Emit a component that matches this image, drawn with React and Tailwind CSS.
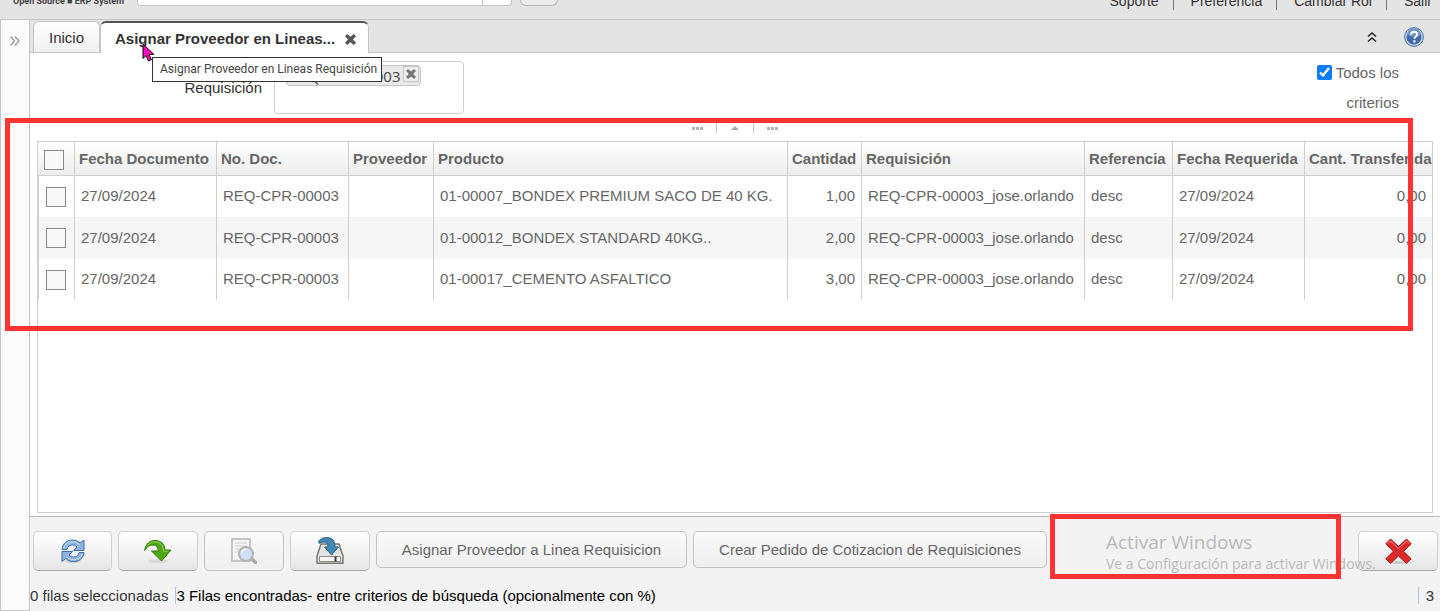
import { useState } from 'react';

const COLUMNS = [
  { key: 'fechaDoc', label: 'Fecha Documento', width: 'w-[142px]' },
  { key: 'noDoc', label: 'No. Doc.', width: 'w-[132px]' },
  { key: 'proveedor', label: 'Proveedor', width: 'w-[85px]' },
  { key: 'producto', label: 'Producto', width: 'w-auto' },
  { key: 'cantidad', label: 'Cantidad', width: 'w-[74px]', numeric: true },
  { key: 'requisicion', label: 'Requisición', width: 'w-[223px]' },
  { key: 'referencia', label: 'Referencia', width: 'w-[88px]' },
  { key: 'fechaReq', label: 'Fecha Requerida', width: 'w-[132px]' },
  { key: 'transferida', label: 'Cant. Transferida', width: 'w-[127px]', numeric: true },
];

const baseRow = {
  fechaDoc: '27/09/2024',
  noDoc: 'REQ-CPR-00003',
  proveedor: '',
  requisicion: 'REQ-CPR-00003_jose.orlando',
  referencia: 'desc',
  fechaReq: '27/09/2024',
  transferida: '0,00',
};

const ROWS = [
  { ...baseRow, id: 1, producto: '01-00007_BONDEX PREMIUM SACO DE 40 KG.', cantidad: '1,00' },
  { ...baseRow, id: 2, producto: '01-00012_BONDEX STANDARD 40KG..', cantidad: '2,00' },
  { ...baseRow, id: 3, producto: '01-00017_CEMENTO ASFALTICO', cantidad: '3,00' },
];

const CloseIcon = ({ className }) => (
  <svg viewBox="0 0 10 10" className={className} aria-hidden="true">
    <path d="M0 2 2 0 5 2.6 8 0 10 2 7.2 5 10 8 8 10 5 7.4 2 10 0 8 2.8 5z" fill="currentColor" />
  </svg>
);

const RefreshIcon = () => (
  <svg viewBox="0 0 24 24" className="size-6" aria-hidden="true">
    <ellipse cx="12" cy="22" rx="8" ry="2" fill="#000" opacity="0.12" />
    <path
      d="M1 10.500C1.500 4.500 6 1 11.500 1c3 0 5.500 1 7.500 3l4-3v10.500H12.500L16 8c-1.300-1.300-3-2-4.800-2-2.700 0-4.500 1.500-5.400 4.500z"
      fill="#8fb3de"
      stroke="#3c6eb0"
    />
    <path
      d="M23 13.500c-.5 6-5 9-10.500 9-3 0-5.500-1-7.500-3l-4 3V12.500h10.500L8 16c1.300 1.300 3 2 4.800 2 2.700 0 4.500-1.500 5.400-4.500z"
      fill="#8fb3de"
      stroke="#3c6eb0"
    />
    <path d="M3 9c1-4 4.500-6.200 8.500-6.200 3 0 5 1 7 3M21 15c-1 4-4.500 5.700-8.500 5.700-3 0-5-1-7-3" fill="none" stroke="#d3e3f5" />
  </svg>
);

const ArrowIcon = () => (
  <svg viewBox="0 0 28 24" className="h-6 w-7" aria-hidden="true">
    <ellipse cx="14" cy="22" rx="10" ry="2" fill="#000" opacity="0.08" />
    <path
      d="M.7 11.500C1.500 4.500 6 1.500 11 1.500c6 0 9.500 3.500 10 9.500h6L17.500 22 7.500 12h6.800c-.5-4-2.300-6-5.300-6-3 0-6 1.500-8.300 5.500z"
      fill="#4fa514"
      stroke="#357a0a"
    />
    <path d="M3 7.500C5 4 8 2.900 11 2.900c5 0 8 3 8.600 9.300h4" fill="none" stroke="#9ad65c" />
  </svg>
);

const ZoomIcon = () => (
  <svg viewBox="0 0 26 26" className="size-[26px]" aria-hidden="true">
    <path d="M1 1h18v22H1z" fill="#f6f6f6" stroke="#b5b5b5" strokeWidth="1.500" />
    <path d="M4 5h12M4 8h12M4 11h7M4 14h5" stroke="#cfcfcf" />
    <path d="m20.500 20.500 4 4" stroke="#a9a9a9" strokeWidth="3.500" strokeLinecap="round" />
    <circle cx="15" cy="16" r="7" fill="#cfe0f5" stroke="#b3b3b3" strokeWidth="2" />
    <path d="M10.500 15.500c0-2.500 2-4.500 4.500-4.500" fill="none" stroke="#f4f9ff" strokeWidth="1.500" />
  </svg>
);

const SaveIcon = () => (
  <svg viewBox="0 0 28 28" className="size-7" aria-hidden="true">
    <path d="M5 7h18l4 12v7.200H1V19z" fill="#e3e3e0" stroke="#7a7a76" strokeWidth="1.500" strokeLinejoin="round" />
    <path d="M3.500 19.500h21v5h-21z" fill="#f4f4f2" stroke="#8d8d88" />
    <path d="M18.500 19.500h2v5h-2z" fill="#3b3b39" />
    <path
      d="M2.500 4.500C5 1 8 .6 11 .6c5 0 8 3 8 9.400h3.500L15.500 18 8.500 10H12c0-3.500-1.500-5-4-5-1.500 0-3 .5-4.500 1.500z"
      fill="#4487b6"
      stroke="#2c6590"
    />
  </svg>
);

const CancelIcon = () => (
  <svg viewBox="0 0 27 27" className="size-[27px]" aria-hidden="true">
    <ellipse cx="13.500" cy="24.500" rx="8" ry="1.500" fill="#000" opacity="0.15" />
    <path
      d="M5.500 1 13.500 8.500 21.500 1l4.700 4.800-7.600 7.500 7.600 7.500-4.700 4.700-8-7.500-8 7.500-4.700-4.700 7.600-7.500L.8 5.800z"
      fill="#dc2a2a"
      stroke="#b11717"
      strokeLinejoin="round"
    />
    <path d="M3 5.500 5.500 3l8 7.500L21.500 3 24 5.500" fill="none" stroke="#f08a8a" />
  </svg>
);

const HelpIcon = () => (
  <svg viewBox="0 0 20 20" className="size-5" aria-hidden="true">
    <circle cx="10" cy="10" r="9.400" fill="#c4d3e8" stroke="#4a70a8" />
    <circle cx="10" cy="10" r="7.500" fill="#3f6bad" />
    <path d="M3 8a7 7 0 0 1 14 0c-4 2-9 3-14 0z" fill="#6f93c8" />
    <path d="M7 7.800c0-2 1.300-3 3.200-3 1.800 0 3 1 3 2.600 0 2-2.700 2.100-2.700 4.300" fill="none" stroke="#fff" strokeWidth="2" />
    <path d="M9.300 13.300h2.200v2.200H9.300z" fill="#fff" />
  </svg>
);

const MENU = ['Soporte', 'Preferencia', 'Cambiar Rol', 'Salir'];

const Header = () => (
  <header className="flex h-5 shrink-0 items-start overflow-hidden border-b border-[#c5c5c5] bg-[#e4e4e4]">
    <div className="ml-[13px] w-[124px] shrink-0 font-['Roboto',sans-serif] text-[9px] font-bold whitespace-nowrap text-[#444]">
      <p className="-mt-[5px] leading-3">Open Source ■ ERP System</p>
    </div>
    <div className="flex flex-1 gap-2">
      <div className="flex h-[6px] w-[375px] rounded-b border border-t-0 border-[#c5c5c5] bg-white">
        <div className="flex-1 border-r border-[#c5c5c5]" />
        <div className="w-7" />
      </div>
      <div className="h-[6px] w-[38px] rounded-b-md border border-t-0 border-[#b5b5b5] bg-[#ececec]" />
    </div>
    <nav className="-mt-2 mr-2 flex text-[14px] leading-[18px] text-[#333]">
      {MENU.map((item, i) => (
        <a
          key={item}
          href="#"
          className={i < MENU.length - 1 ? 'mr-[17px] border-r border-[#777] pr-[14px]' : ''}
        >
          {item}
        </a>
      ))}
    </nav>
  </header>
);

const Tabs = () => (
  <div className="flex h-[33px] shrink-0 items-end border-b border-[#c5c5c5] bg-[#e4e4e4] pl-[3px]">
    <button className="h-[31px] w-[67px] rounded-t-md border border-b-0 border-[#c5c5c5] bg-gradient-to-b from-white to-[#f0f0f0] pt-[2px] text-[15px] text-[#333]">
      Inicio
    </button>
    <div className="-mb-px flex h-8 items-center gap-[10px] rounded-t-md border-x border-t-2 border-x-[#c5c5c5] border-t-[#555] bg-white pt-[2px] pr-3 pl-[14px] text-[#333]">
      <button className="text-[15px] font-bold">Asignar Proveedor en Lineas...</button>
      <button aria-label="Cerrar pestaña" className="text-[#555]">
        <CloseIcon className="size-[11px]" />
      </button>
    </div>
    <div className="ml-auto flex h-[31px] items-center gap-[26px] pr-4">
      <button aria-label="Contraer">
        <svg viewBox="0 0 12 10" className="h-[10px] w-3" aria-hidden="true">
          <path d="m2 4.500 4-3.500 4 3.500M2 9.500 6 6l4 3.500" fill="none" stroke="#222" strokeWidth="1.500" />
        </svg>
      </button>
      <button aria-label="Ayuda">
        <HelpIcon />
      </button>
    </div>
  </div>
);

const Criteria = () => (
  <div className="flex h-[68px] shrink-0 items-start pt-2 text-[15px] text-[#333]">
    <span id="requisicion-label" className="mt-4 w-[232px] text-right leading-[22px]">
      Requisición
    </span>
    <div
      role="group"
      aria-labelledby="requisicion-label"
      className="ml-3 flex h-[53px] w-[190px] items-start rounded border border-[#cfcfcf] bg-white pt-[3px] pl-[11px]"
    >
      <span className="flex h-[21px] items-start rounded border border-[#c5c5c5] bg-[#e9e9e9] pr-px pl-1 font-['Open_Sans','Noto_Sans',sans-serif] leading-5 text-[#444]">
        REQ-CPR-00003
        <button aria-label="Quitar" className="ml-[2px] border border-[#c5c5c5] bg-[#eee] p-[2px] text-[#777]">
          <CloseIcon className="size-[10px]" />
        </button>
      </span>
    </div>
    <label className="-mt-[3px] mr-[41px] ml-auto w-[100px] text-right leading-[30px] text-[#666]">
      <input type="checkbox" defaultChecked className="mr-1 size-[15px] align-[-2px] accent-[#0a7cff]" />
      Todos los criterios
    </label>
  </div>
);

const Dots = () => (
  <svg viewBox="0 0 11 3" className="h-[3px] w-[11px]" aria-hidden="true">
    <path d="M0 0h3v3H0zM4 0h3v3H4zM8 0h3v3H8z" fill="#b5b5b5" />
  </svg>
);

const Splitter = () => (
  <div className="flex h-5 shrink-0 justify-center pt-[2px]">
    <div className="flex h-[10px] items-center">
      <Dots />
      <div className="mx-[13px] flex h-full w-[38px] items-center justify-center border-x border-[#c5c5c5]">
        <svg viewBox="0 0 8 4" className="h-1 w-2" aria-hidden="true">
          <path d="M4 0 8 4H0z" fill="#aaa" />
        </svg>
      </div>
      <Dots />
    </div>
  </div>
);

const Check = ({ label, ...props }) => (
  <input
    type="checkbox"
    aria-label={label}
    className="block size-5 appearance-none border border-[#888] bg-[#f8f8f8] checked:bg-[#777]"
    {...props}
  />
);

const Grid = ({ selected, toggle, toggleAll }) => (
  <div className="mr-[7px] mb-[3px] ml-[7px] min-h-0 flex-1 overflow-hidden border border-[#cfcfcf] bg-white">
    <table className="w-full table-fixed border-separate border-spacing-0 text-[15px] whitespace-nowrap text-[#666]">
      <thead>
        <tr className="h-[34px] bg-gradient-to-b from-white to-[#ececec] text-left">
          <th className="w-[37px] border-r border-b border-[#cfcfcf] pt-[2px] pl-[6px]">
            <Check label="Seleccionar todo" checked={selected.length === ROWS.length} onChange={toggleAll} />
          </th>
          {COLUMNS.map(({ key, label, width }) => (
            <th
              key={key}
              className={`${width} border-r border-b border-[#cfcfcf] pt-[2px] pl-1 font-bold last:border-r-0`}
            >
              {label}
            </th>
          ))}
        </tr>
      </thead>
      <tbody>
        {ROWS.map((row) => (
          <tr key={row.id} className="h-[41px] even:h-[42px] even:bg-[#f6f6f6]">
            <td className="border-r border-l border-[#cfcfcf] pl-[7px]">
              <Check
                label={`Seleccionar fila ${row.id}`}
                checked={selected.includes(row.id)}
                onChange={() => toggle(row.id)}
              />
            </td>
            {COLUMNS.map(({ key, numeric }) => (
              <td
                key={key}
                className={`border-r border-[#cfcfcf] px-[6px] last:border-r-0 ${numeric ? 'text-right' : 'text-left'}`}
              >
                {row[key]}
              </td>
            ))}
          </tr>
        ))}
      </tbody>
    </table>
  </div>
);

const iconButton =
  'flex h-10 shrink-0 items-center justify-center rounded-[5px] border border-[#cfcfcf] border-b-[#aaa] bg-gradient-to-b from-white to-[#e6e6e6]';
const textButton =
  'h-[37px] shrink-0 rounded-[5px] border border-[#c2c2c2] bg-gradient-to-b from-[#fafafa] to-[#efefef] pt-px text-[15px] text-[#666]';

const Actions = () => (
  <div className="flex items-start gap-[6px] pt-[14px] pr-[2px] pl-[3px]">
    <button aria-label="Refrescar" className={`${iconButton} w-[79px]`}>
      <RefreshIcon />
    </button>
    <button aria-label="Procesar" className={`${iconButton} w-[80px]`}>
      <ArrowIcon />
    </button>
    <button
      aria-label="Acercar"
      className="flex h-10 w-[80px] shrink-0 items-center justify-center rounded-[5px] border border-[#c2c2c2] bg-gradient-to-b from-[#fafafa] to-[#efefef]"
    >
      <ZoomIcon />
    </button>
    <button aria-label="Exportar" className={`${iconButton} w-[80px]`}>
      <SaveIcon />
    </button>
    <button className={`${textButton} w-[311px]`}>Asignar Proveedor a Linea Requisicion</button>
    <button className={`${textButton} w-[354px]`}>Crear Pedido de Cotizacion de Requisiciones</button>
    <button aria-label="Cancelar" className={`${iconButton} ml-auto w-20`}>
      <CancelIcon />
    </button>
  </div>
);

const StatusBar = () => (
  <div className="mt-4 flex items-center text-[15px] leading-[17px] text-black">
    <span className="mr-[7px] text-[#333]">0 filas seleccionadas</span>
    <span className="border-l border-[#a9c4f5]">3 Filas encontradas- entre criterios de búsqueda (opcionalmente con %)</span>
    <span className="ml-auto border-l border-[#a9c4f5] pr-[6px] pl-[7px] text-[#333]">3</span>
  </div>
);

const App = () => {
  const [selected, setSelected] = useState([]);

  const toggle = (id) =>
    setSelected((prev) => (prev.includes(id) ? prev.filter((x) => x !== id) : [...prev, id]));
  const toggleAll = () => setSelected((prev) => (prev.length === ROWS.length ? [] : ROWS.map((r) => r.id)));

  return (
    <div className="relative flex h-screen flex-col overflow-hidden bg-white font-['Liberation_Sans',Arial,sans-serif]">
      <Header />

      <div className="flex min-h-0 flex-1">
        {/* Collapsed side panel */}
        <aside className="flex w-[30px] shrink-0 items-start justify-center border border-t-0 border-[#c5c5c5] bg-[#fbfbfb] pt-4">
          <button aria-label="Expandir">
            <svg viewBox="0 0 10 10" className="size-[10px]" aria-hidden="true">
              <path d="m.5.5 4 4.500-4 4.500M5 .5 9 5 5 9.500" fill="none" stroke="#999" strokeWidth="1.300" />
            </svg>
          </button>
        </aside>

        <main className="flex min-w-0 flex-1 flex-col">
          <Tabs />
          <Criteria />
          <Splitter />
          <Grid selected={selected} toggle={toggle} toggleAll={toggleAll} />
          <footer className="h-[95px] shrink-0 border-t border-[#bbb] bg-[#f3f3f3]">
            <Actions />
            <StatusBar />
          </footer>
        </main>
      </div>

      {/* Tooltip and mouse pointer */}
      <div
        role="tooltip"
        className="absolute top-[57px] left-[152px] border border-[#333] bg-white pr-1 pl-[7px] font-['Roboto',sans-serif] text-[12px] leading-[23px] whitespace-nowrap text-[#444]"
      >
        Asignar Proveedor en Lineas Requisición
      </div>
      <svg viewBox="0 0 13 19" className="absolute top-[43px] left-[142px] h-[19px] w-[13px]" aria-hidden="true">
        <path d="M1 1v14.500l3-3 2.500 5.500 3-1.500L7 11.500h5z" fill="#f0b" stroke="#000" />
      </svg>

      {/* Windows activation watermark */}
      <div className="pointer-events-none absolute right-[59px] bottom-[37px] w-[275px] font-['Open_Sans','Noto_Sans',sans-serif] whitespace-nowrap text-[#b9b9b9]">
        <p className="text-[19px] leading-[24px]">Activar Windows</p>
        <p className="text-[14px] leading-[20px]">Ve a Configuración para activar Windows.</p>
      </div>

      {/* Highlight frames */}
      <div className="pointer-events-none absolute top-[118px] right-[27px] left-[5px] h-[213px] border-5 border-[#f33]" />
      <div className="pointer-events-none absolute top-[514px] right-[99px] h-[65px] w-[291px] border-5 border-[#f33]" />
    </div>
  );
};

export default App;
